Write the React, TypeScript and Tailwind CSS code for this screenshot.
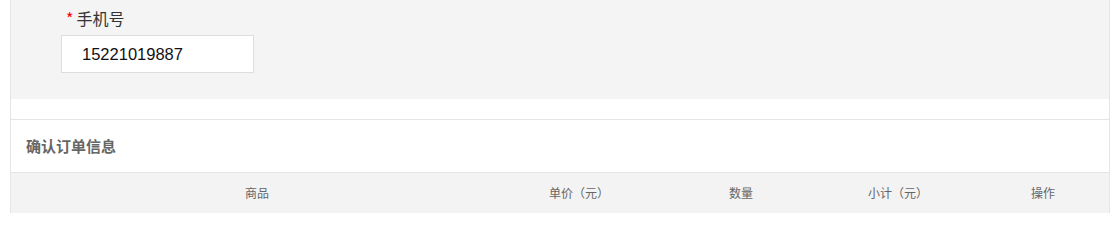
export default function App() {
  const cols = [
    { label: '商品', w: 'w-[492px]' },
    { label: '单价（元）', w: 'w-[152px]' },
    { label: '数量', w: 'w-[172px]' },
    { label: '小计（元）', w: 'w-[142px]' },
    { label: '操作', w: 'flex-1 pl-[8px]' },
  ];

  return (
    <div className="min-h-[200px] bg-white font-['Noto_Sans_CJK_SC','Noto_Sans',sans-serif]">
      <div className="ml-[10px] w-[1100px] border-x border-[#e5e5e5]">
        {/* contact info */}
        <div className="h-[99px] bg-[#f4f4f4] pt-[8px]">
          <div className="flex items-center pl-[55px] text-[16px] leading-[20px] text-[#333]">
            <span className="mr-[3px] text-[16px] text-[#ff0000]">*</span>
            <span>手机号</span>
          </div>
          <div className="ml-[50px] mt-[7px] flex h-[38px] w-[193px] items-center border border-[#dddddd] bg-white pl-[20px] font-['Liberation_Sans',sans-serif] text-[16.5px] text-[#111]">
            15221019887
          </div>
        </div>

        <div className="h-[20px] bg-white" />

        {/* order info */}
        <div className="flex h-[54px] items-center border-y border-[#e5e5e5] bg-white pl-[15px]">
          <h2 className="text-[15px] font-bold text-[#666]">确认订单信息</h2>
        </div>

        <div className="flex h-[40px] items-center bg-[#f3f3f3] text-[12px] text-[#666]">
          {cols.map((c) => (
            <div key={c.label} className={`${c.w} text-center`}>
              {c.label}
            </div>
          ))}
        </div>
      </div>
    </div>
  );
}
